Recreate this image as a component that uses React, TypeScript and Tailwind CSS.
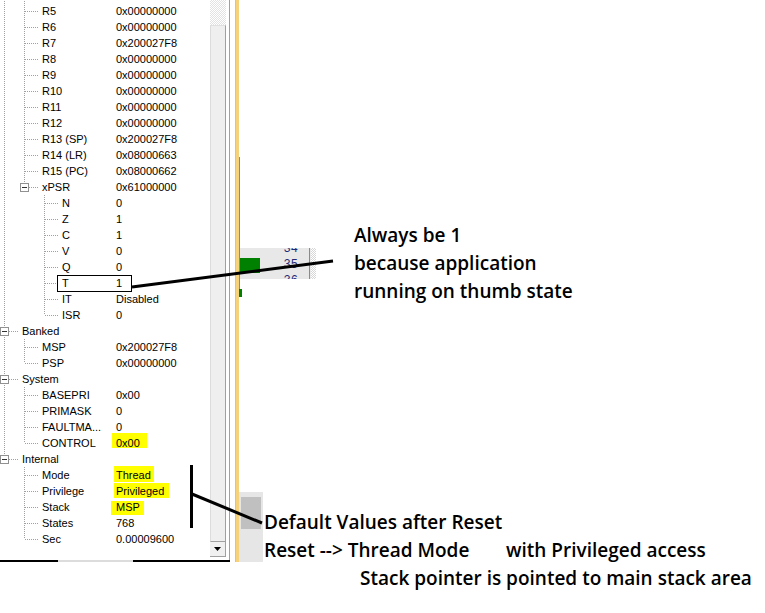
type Cell = 'pipe' | 'blank' | 'tee' | 'ell';

interface Row {
  label: string;
  value: string;
  cells: Cell[];
  box?: boolean;
  hl?: string;
}

const R: Cell[] = ['pipe', 'tee'];
const F: Cell[] = ['pipe', 'blank', 'tee'];
const I: Cell[] = ['blank', 'tee'];

const rows: Row[] = [
  { label: 'R4', value: '0x00000000', cells: R },
  { label: 'R5', value: '0x00000000', cells: R },
  { label: 'R6', value: '0x00000000', cells: R },
  { label: 'R7', value: '0x200027F8', cells: R },
  { label: 'R8', value: '0x00000000', cells: R },
  { label: 'R9', value: '0x00000000', cells: R },
  { label: 'R10', value: '0x00000000', cells: R },
  { label: 'R11', value: '0x00000000', cells: R },
  { label: 'R12', value: '0x00000000', cells: R },
  { label: 'R13 (SP)', value: '0x200027F8', cells: R },
  { label: 'R14 (LR)', value: '0x08000663', cells: R },
  { label: 'R15 (PC)', value: '0x08000662', cells: R },
  { label: 'xPSR', value: '0x61000000', cells: ['pipe', 'ell'], box: true },
  { label: 'N', value: '0', cells: F },
  { label: 'Z', value: '1', cells: F },
  { label: 'C', value: '1', cells: F },
  { label: 'V', value: '0', cells: F },
  { label: 'Q', value: '0', cells: F },
  { label: 'T', value: '1', cells: F },
  { label: 'IT', value: 'Disabled', cells: F },
  { label: 'ISR', value: '0', cells: ['pipe', 'blank', 'ell'] },
  { label: 'Banked', value: '', cells: ['tee'], box: true },
  { label: 'MSP', value: '0x200027F8', cells: R },
  { label: 'PSP', value: '0x00000000', cells: ['pipe', 'ell'] },
  { label: 'System', value: '', cells: ['tee'], box: true },
  { label: 'BASEPRI', value: '0x00', cells: R },
  { label: 'PRIMASK', value: '0', cells: R },
  { label: 'FAULTMA...', value: '0', cells: R },
  { label: 'CONTROL', value: '0x00', cells: ['pipe', 'ell'], hl: 'left-[-4px] top-[-2px] w-[35px] h-[15px]' },
  { label: 'Internal', value: '', cells: ['ell'], box: true },
  { label: 'Mode', value: 'Thread', cells: I, hl: 'left-[-2px] top-[-1px] w-[40px] h-[16px]' },
  { label: 'Privilege', value: 'Privileged', cells: I, hl: 'left-[-2px] top-0 w-[55px] h-[15px]' },
  { label: 'Stack', value: 'MSP', cells: I, hl: 'left-[-5px] top-[2px] w-[33px] h-[14px]' },
  { label: 'States', value: '768', cells: I },
  { label: 'Sec', value: '0.00009600', cells: ['blank', 'ell'] },
];

function TreeCell({ kind, box }: { kind: Cell; box?: boolean }) {
  const dot = { stroke: '#a0a0a0', strokeWidth: 1, strokeDasharray: '1 1' };
  return (
    <svg width="20" height="16" className="shrink-0">
      {kind === 'pipe' || kind === 'tee' ? <line x1="4.5" y1="0" x2="4.5" y2="16" {...dot} /> : null}
      {kind === 'ell' ? <line x1="4.5" y1="0" x2="4.5" y2="8" {...dot} /> : null}
      {kind === 'tee' || kind === 'ell' ? <line x1={box ? 9 : 5} y1="8.5" x2="19" y2="8.5" {...dot} /> : null}
      {box ? (
        <g>
          <rect x="0.5" y="4.5" width="8" height="8" fill="#fff" stroke="#919191" />
          <line x1="2" y1="8.5" x2="7" y2="8.5" stroke="#333" />
        </g>
      ) : null}
    </svg>
  );
}

function TreeRow({ row }: { row: Row }) {
  const last = row.cells.length - 1;
  return (
    <div className="flex h-[16px] leading-[16px] whitespace-nowrap">
      <div className="flex w-[116px] shrink-0 overflow-hidden">
        {row.cells.map((c, i) => (
          <TreeCell key={i} kind={c} box={i === last && row.box} />
        ))}
        <span className="pl-[2px]">{row.label}</span>
      </div>
      <div className="relative">
        {row.hl ? <span className={'absolute bg-[#ffff00] ' + row.hl} /> : null}
        <span className="relative">{row.value}</span>
      </div>
    </div>
  );
}

function Scrollbar() {
  return (
    <div className="flex flex-col w-[16px] h-[560px] shrink-0">
      <div className="h-[25px] bg-[repeating-conic-gradient(#e2e2e2_0_25%,#ffffff_0_50%)] bg-[length:2px_2px]" />
      <div className="h-[517px] bg-[#efefef] border border-t-[#e0e0e0] border-l-[#dcdcdc] border-r-[#a0a0a0] border-b-[#a0a0a0]" />
      <div className="h-[15px] flex items-center justify-center bg-[#f0f0f0] border-r border-b border-[#a0a0a0]">
        <svg width="7" height="4">
          <polygon points="0,0 7,0 3.5,4" fill="#000" />
        </svg>
      </div>
      <div className="flex-1 bg-white" />
    </div>
  );
}

function RegisterPanel() {
  return (
    <div className="flex flex-col w-[230px] h-[562px] shrink-0 font-['Liberation_Sans',Arial,sans-serif] text-[11px] text-black">
      <div className="flex h-[560px] border-r border-[#a0a0a0]">
        <div className="w-[210px] h-[560px] overflow-hidden shrink-0">
          <div className="-mt-[13px]">
            {rows.map((r, i) => (
              <TreeRow key={i} row={r} />
            ))}
          </div>
        </div>
        <Scrollbar />
        <div className="w-[3px] bg-white" />
      </div>
      <div className="flex h-[2px]">
        <div className="w-[58px] bg-black" />
        <div className="w-[75px] bg-[#dcdcdc]" />
        <div className="flex-1 bg-black" />
      </div>
    </div>
  );
}

function EditorStrip() {
  return (
    <div className="flex h-[562px] shrink-0">
      <div className="w-[5px]" />
      <div className="w-[1px] bg-[#c4c4c4]" />
      <div className="w-[3px] bg-[#f6d27a]" />
      <div className="flex flex-col w-[81px]">
        <div className="h-[157px]" />
        <div className="h-[91px] w-[1px] bg-[#8a8a8a]" />
        <div className="flex h-[31px]">
          <div className="w-[1px] bg-[#8a8a8a]" />
          <div className="flex w-[76px] bg-[#e8e8e8] overflow-hidden">
            <div className="w-[20px]">
              <div className="mt-[10px] h-[15px] bg-[#008000]" />
            </div>
            <div className="w-[38px] -mt-[7px] text-right font-['Liberation_Mono',monospace] text-[12px] leading-[16px] text-[#1e2a78]">
              <div>34</div>
              <div>35</div>
              <div>36</div>
            </div>
            <div className="w-[11px]" />
            <div className="w-[1px] bg-[#8a8a8a]" />
            <div className="w-[1px]" />
            <div className="w-[5px] bg-[repeating-conic-gradient(#d6d6d6_0_25%,#ffffff_0_50%)] bg-[length:2px_2px]" />
          </div>
        </div>
        <div className="h-[10px] w-[1px] bg-[#8a8a8a]" />
        <div className="h-[8px] w-[3px] bg-[#008000]" />
        <div className="h-[195px]" />
        <div className="h-[70px] w-[24px] bg-[#e6e6e6] pt-[5px] pl-[2px]">
          <div className="h-[32px] w-[20px] bg-[#c0c0c0]" />
        </div>
      </div>
    </div>
  );
}

export default function App() {
  return (
    <div className="relative w-[765px] h-[613px] bg-white overflow-hidden">
      <div className="flex items-start">
        <RegisterPanel />
        <EditorStrip />
      </div>

      <div className="absolute left-[354px] top-[221px] font-['Open_Sans',sans-serif] font-semibold text-[19px] leading-[28px] text-black whitespace-nowrap">
        <p>Always be 1</p>
        <p>because application</p>
        <p>running on thumb state</p>
      </div>

      <div className="absolute left-[264px] top-[508px] font-['Open_Sans',sans-serif] font-semibold text-[19px] leading-[28px] text-black whitespace-nowrap">
        <p>Default Values after Reset</p>
        <p className="flex">
          <span className="w-[242px]">Reset --&gt; Thread Mode</span>
          <span>with Privileged access</span>
        </p>
        <p className="pl-[96px]">Stack pointer is pointed to main stack area</p>
      </div>

      <svg className="absolute inset-0 pointer-events-none" width="765" height="613">
        <rect x="57.5" y="275.5" width="74" height="16" fill="none" stroke="#000" />
        <line x1="132" y1="287" x2="333" y2="261" stroke="#000" strokeWidth="3" />
        <line x1="191.5" y1="465" x2="191.5" y2="528" stroke="#000" strokeWidth="3" />
        <line x1="192" y1="494" x2="262" y2="523" stroke="#000" strokeWidth="3" />
      </svg>
    </div>
  );
}
